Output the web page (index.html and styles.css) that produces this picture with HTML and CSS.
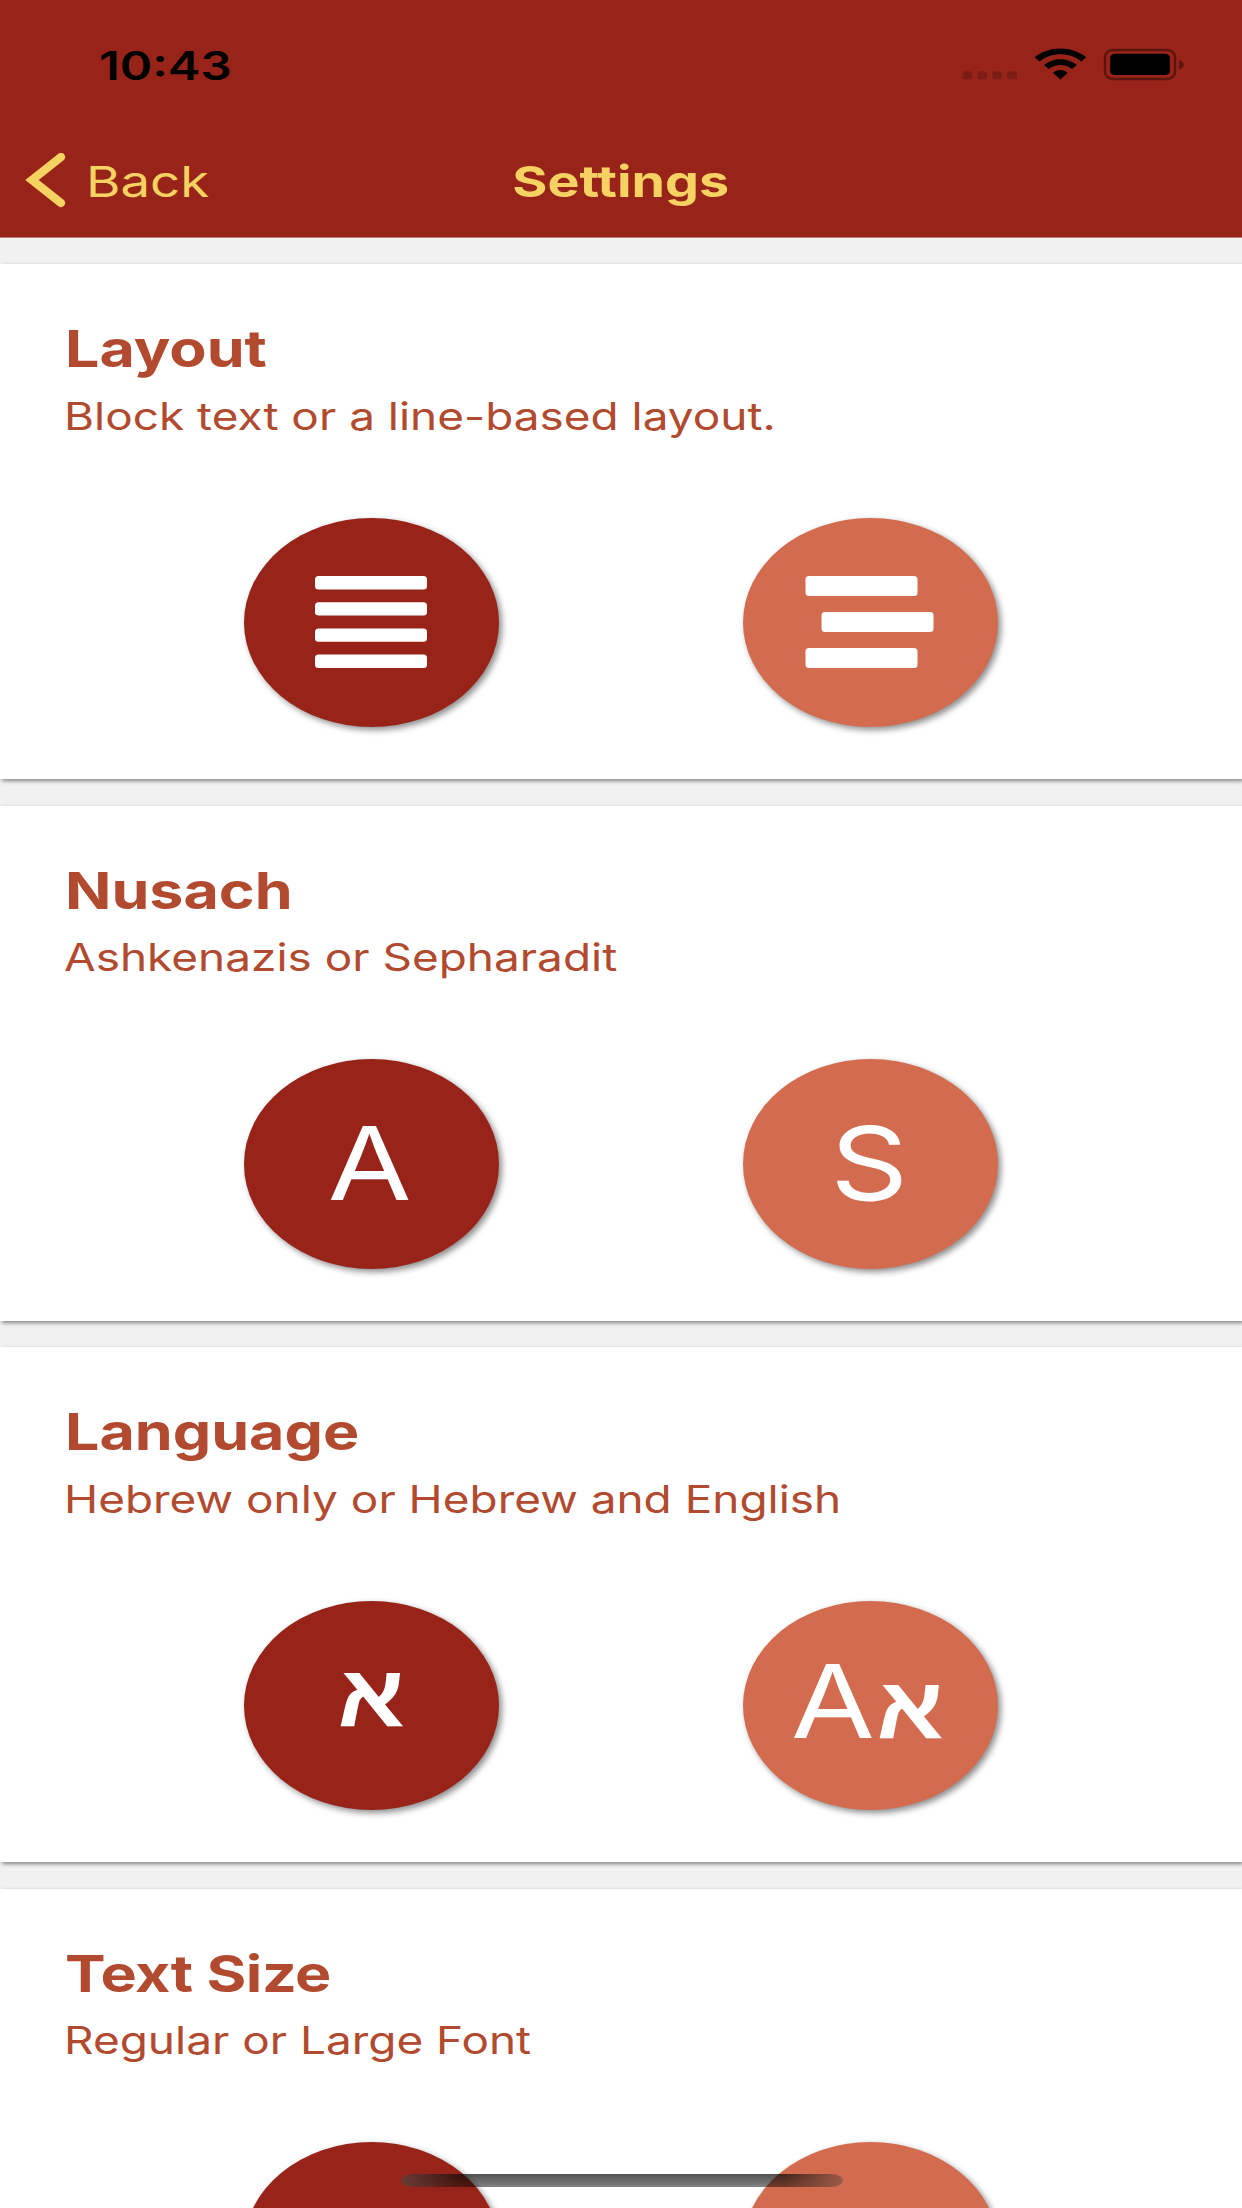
FILE: index.html
```html
<!DOCTYPE html>
<html lang="en">
<head>
<meta charset="utf-8">
<title>Settings</title>
<link rel="stylesheet" href="styles.css">
</head>
<body>
<div class="screen">
  <header class="header">
    <div class="status">
      <span class="time wide">10:43</span>
      <svg class="indicators" width="224" height="36" viewBox="0 0 224 36">
        <g fill="#7b1d14">
          <rect x="2.500" y="25.300" width="9.600" height="8" rx="2.500"/>
          <rect x="17.500" y="25.300" width="9.600" height="8" rx="2.500"/>
          <rect x="32.400" y="25.300" width="9.600" height="8" rx="2.500"/>
          <rect x="47.300" y="25.300" width="9.600" height="8" rx="2.500"/>
        </g>
        <g>
          <path d="M74.600 11.200C88.500 -0.400 112 -0.400 126.200 11.200L121.300 15.400C109.500 5.800 91.300 5.800 79.600 15.400Z"/>
          <path d="M83.900 18.900C93.500 11.400 107.300 11.400 116.900 18.900L112 23C104.900 17.500 96 17.500 88.800 23Z"/>
          <path d="M93 26.700C97.500 23.200 103.300 23.200 107.800 26.700L100.400 33.400Z"/>
        </g>
        <rect x="145" y="4" width="70" height="29" rx="8" ry="7" fill="none" stroke="#5c150e" stroke-width="2.400"/>
        <rect x="150.200" y="7.800" width="59.600" height="21.200" rx="4.500" ry="3.800"/>
        <path d="M219.200 14c6 2 6 7.600 0 9.600z" fill="#5c150e"/>
      </svg>
    </div>
    <nav class="nav">
      <a class="back">
        <svg width="42" height="56" viewBox="0 0 42 56"><path d="M36 4L7 27L36 50" fill="none" stroke="#f6d263" stroke-width="8.400" stroke-linecap="round"/></svg>
        <span class="back-label wide">Back</span>
      </a>
      <h1 class="nav-title wide">Settings</h1>
    </nav>
  </header>
  <main class="cards">
    <section class="card">
      <h2 class="title wide">Layout</h2>
      <p class="subtitle wide">Block text or a line-based layout.</p>
      <div class="options">
        <button class="option selected">
          <svg width="112" height="94" viewBox="0 0 112 94" fill="#fff"><rect y="1" width="112" height="13.400" rx="3.500"/><rect y="27.200" width="112" height="13.400" rx="3.500"/><rect y="53.400" width="112" height="13.400" rx="3.500"/><rect y="79.500" width="112" height="13.400" rx="3.500"/></svg>
        </button>
        <button class="option">
          <svg width="130" height="94" viewBox="0 0 130 94" fill="#fff"><rect x="0.500" y="1" width="112" height="20" rx="3.500"/><rect x="16.500" y="37" width="112" height="20" rx="3.500"/><rect x="0.500" y="73" width="112" height="20" rx="3.500"/></svg>
        </button>
      </div>
    </section>
    <section class="card">
      <h2 class="title wide">Nusach</h2>
      <p class="subtitle wide">Ashkenazis or Sepharadit</p>
      <div class="options">
        <button class="option selected"><span class="glyph">A</span></button>
        <button class="option"><span class="glyph">S</span></button>
      </div>
    </section>
    <section class="card">
      <h2 class="title wide">Language</h2>
      <p class="subtitle wide">Hebrew only or Hebrew and English</p>
      <div class="options">
        <button class="option selected"><span class="glyph hebrew raised">א</span></button>
        <button class="option"><span class="glyph pair">A<span class="hebrew">א</span></span></button>
      </div>
    </section>
    <section class="card">
      <h2 class="title tight wide">Text Size</h2>
      <p class="subtitle wide">Regular or Large Font</p>
      <div class="options">
        <button class="option selected"></button>
        <button class="option"></button>
      </div>
    </section>
  </main>
  <div class="home-indicator"></div>
</div>
</body>
</html>
```
FILE: styles.css
```css
* { box-sizing: border-box; }
body { margin: 0; font-family: Inter, "Liberation Sans", sans-serif; background: #f1f1f1; }
h1, h2, p { margin: 0; }
.screen { position: relative; width: 1242px; height: 2208px; overflow: hidden; }
.wide { transform: scaleX(1.218); transform-origin: left center; width: max-content; }

.header { height: 238px; background: #982419; border-bottom: 1px solid #bf8079; }
.status { display: flex; justify-content: space-between; height: 131px; padding: 41px 58px 0 99px; }
.time { font-size: 39px; font-weight: 600; line-height: 50px; transform: scaleX(1.260); }
.indicators { margin-top: 5px; }
.nav { display: grid; grid-template-columns: 1fr auto 1fr; align-items: center; height: 100px; color: #f6d263; }
.back { display: flex; align-items: center; gap: 19px; padding-left: 25px; }
.back-label { font-size: 43px; line-height: 56px; transform: scaleX(1.226); }
.nav-title { font-size: 43px; font-weight: 700; line-height: 56px; transform: scaleX(1.250); transform-origin: center; }

.cards { display: flex; flex-direction: column; gap: 26.400px; padding-top: 26.400px; }
.card { flex: none; height: 515.100px; padding: 55px 0 0 64px; background: #fff; color: #b14a2e; box-shadow: 2px 2px 4px rgba(0, 0, 0, 0.45); }
.title { margin-left: 0.800px; font-size: 50.500px; font-weight: 700; line-height: 60px; transform: scaleX(1.206); }
.tight { letter-spacing: -0.400px; }
.subtitle { margin-top: 11.500px; font-size: 37.700px; line-height: 50px; transform: scaleX(1.219); }
.options { display: flex; justify-content: center; gap: 244px; margin: 77px 64.700px 0 0; }
.option { display: flex; align-items: center; justify-content: center; width: 255px; height: 209.400px; padding: 0 1px 2px 0; border: 0; border-radius: 50%; background: #d36c4f; color: #fff; font: inherit; box-shadow: 3px 3px 6px rgba(0, 0, 0, 0.45); }
.selected { background: #982419; }
.glyph { font-size: 102px; line-height: 120px; transform: translateX(-0.500px) scaleX(1.190); }
.hebrew { font-family: "Liberation Sans", sans-serif; font-size: 88px; font-weight: 700; }
.raised { margin-bottom: 18px; transform: scaleX(1.120); }
.pair { margin-bottom: 7px; white-space: nowrap; }
.pair .hebrew { display: inline-block; line-height: 1; transform: scaleX(0.940); }

.home-indicator { position: absolute; left: 401px; top: 2174px; width: 442px; height: 13px; border-radius: 12px / 6.500px; background: linear-gradient(90deg, #6a3a34, rgba(106, 58, 52, 0) 14%), linear-gradient(270deg, #9c5a46, rgba(156, 90, 70, 0) 13%), linear-gradient(rgba(8, 8, 8, 0.70), rgba(8, 8, 8, 0.50)); }
```
